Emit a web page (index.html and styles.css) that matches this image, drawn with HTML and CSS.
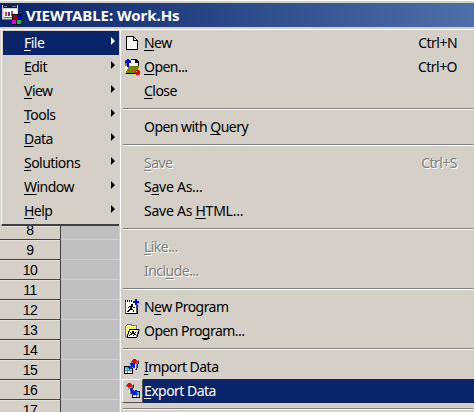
FILE: index.html
```
<!DOCTYPE html>
<html lang="en">
<head>
<meta charset="utf-8">
<title>VIEWTABLE: Work.Hs</title>
<link rel="stylesheet" href="styles.css">
</head>
<body>
<div class="window">
<header class="titlebar">
<svg class="appicon" width="20" height="20" viewBox="0 0 20 20" shape-rendering="crispEdges"><path fill="#d4d0c8" d="M0 0h16v14H0z"/><path fill="#171b35" d="M1 0h14v3H1z"/><path fill="#68749b" d="M2 1h3v1H2zM10 1h4v1h-4z"/><path fill="#fff" d="M2 4h13v8H2z"/><path fill="#e33" d="M3 7h2v4H3zM9 6h2v5H9z"/><path fill="#2445b4" d="M6 7h2v4H6z"/><path fill="#777" d="M0 14h11v1H0zM2 12h9v1H2z"/><path fill="#111" d="M10 9h10v11H10z"/><path fill="#a00022" d="M11 10h4v4h-4z"/><path fill="#00c" d="M16 10h4v4h-4z"/><path fill="#e000e0" d="M10 15h4v4h-4z"/><path fill="#00c43b" d="M15 15h4v4h-4z"/></svg>
<span class="title">VIEWTABLE: Work.Hs</span>
</header>
<main class="body">
<div class="left">
<nav class="menu">
<div class="item active"><span><u>F</u>ile</span><i class="arrow"></i></div>
<div class="item"><span><u>E</u>dit</span><i class="arrow"></i></div>
<div class="item"><span><u>V</u>iew</span><i class="arrow"></i></div>
<div class="item"><span><u>T</u>ools</span><i class="arrow"></i></div>
<div class="item"><span><u>D</u>ata</span><i class="arrow"></i></div>
<div class="item"><span><u>S</u>olutions</span><i class="arrow"></i></div>
<div class="item"><span><u>W</u>indow</span><i class="arrow"></i></div>
<div class="item"><span><u>H</u>elp</span><i class="arrow"></i></div>
</nav>
<div class="table">
<div class="row first"><b>8</b><i></i></div>
<div class="row"><b>9</b><i></i></div>
<div class="row"><b>10</b><i></i></div>
<div class="row"><b>11</b><i></i></div>
<div class="row"><b>12</b><i></i></div>
<div class="row"><b>13</b><i></i></div>
<div class="row"><b>14</b><i></i></div>
<div class="row"><b>15</b><i></i></div>
<div class="row"><b>16</b><i></i></div>
<div class="row"><b>17</b><i></i></div>
</div>
</div>
<nav class="submenu">
<div class="entry"><div class="icon"><svg width="16" height="16" shape-rendering="crispEdges"><path d="M2 1h8v1h1v1h1v1h1v1h1v10H2z"/><path fill="#fff" d="M3 2h6v4h4v8H3zM10 3h1v1h1v1h-2z"/></svg></div><span class="label"><u>N</u>ew</span><span class="key">Ctrl+N</span></div>
<div class="entry"><div class="icon"><svg width="16" height="16" shape-rendering="crispEdges"><path fill="#777" d="M1 1h12v14H1z"/><path fill="#fff" d="M7 1h6l1 2v6H5V3h2z"/><path fill="#ffffa0" d="M1 7h5v2H4v5H1z"/><path d="M7 0h6v1h1v1h1v5h-1V4h-3V1H7zM2 14h11v1H2z"/><path fill="#808000" d="M5 7h10v2h-1v2h-1v2h-1v1H2v-2h1v-2h1V8h1z"/><path fill="#00f" d="M3 0h2v1h1v1h1v2H5v4H3V4H1V2h1V1h1z"/><path fill="#d00" d="M12 11h3v1h1v3h-1v1h-3v-1h-1v-3h1z"/><path fill="#fff" d="M12 12h1v1h-1z"/></svg></div><span class="label"><u>O</u>pen...</span><span class="key">Ctrl+O</span></div>
<div class="entry"><div class="icon"></div><span class="label"><u>C</u>lose</span></div>
<hr>
<div class="entry"><div class="icon"></div><span class="label">Open with <u>Q</u>uery</span></div>
<hr>
<div class="entry disabled"><div class="icon"></div><span class="label"><u>S</u>ave</span><span class="key">Ctrl+S</span></div>
<div class="entry"><div class="icon"></div><span class="label wide">S<u>a</u>ve As...</span></div>
<div class="entry"><div class="icon"></div><span class="label wide">Save As <u>H</u>TML...</span></div>
<hr>
<div class="entry disabled"><div class="icon"></div><span class="label"><u>L</u>ike...</span></div>
<div class="entry disabled"><div class="icon"></div><span class="label">Incl<u>u</u>de...</span></div>
<hr>
<div class="entry"><div class="icon"><svg width="16" height="16" shape-rendering="crispEdges"><path fill="#555" d="M1 2h12v13H1z"/><path fill="#fff" d="M2 2h10v12H2z"/><path d="M1 1h1v2H1zM3 1h1v2H3zM5 1h1v2H5zM7 1h1v2H7zM2 14h12v1H2zM13 6h1v9h-1zM7 5h2v2H7zM5 7h4v1H5zM4 8h1v1H4zM6 8h2v2H6zM9 8h2v1H9zM5 10h4v1H5zM4 11h2v1H4zM3 12h2v1H3zM9 11h1v2H9z"/><path fill="#00f" d="M11 0h2v2h2v2h-2v2h-2V4H9V2h2z"/></svg></div><span class="label">N<u>e</u>w Program</span></div>
<div class="entry"><div class="icon"><svg width="16" height="16" shape-rendering="crispEdges"><path fill="#777" d="M2 2h1V1h5v1h5v4h3v2h-1v3h-1v3h-2v1H2v-1H1V3h1z"/><path fill="#ffff70" d="M3 2h4v1h5v3H5v3H4v4H2V3h1z"/><path fill="#fff" d="M6 7h8v2h-1v3h-1v2H4v-2h1V9h1z"/><path d="M5 6h10v1H5zM4 8h1v3H4zM3 11h1v3H3zM14 8h1v3h-1zM13 11h1v3h-1zM3 14h10v1H3zM8 8h2v2H8zM6 9h1v1H6zM11 9h1v1h-1zM7 10h4v1H7zM6 11h2v1H6zM10 11h2v1h-2zM5 12h1v1H5zM9 12h1v1H9z"/><path fill="#d4d0c8" d="M3 4h1v1H3zM5 4h1v1H5zM7 4h1v1H7zM9 4h1v1H9zM3 7h1v1H3z"/></svg></div><span class="label">Open Pro<u>g</u>ram...</span></div>
<hr>
<div class="entry"><div class="icon"><svg width="16" height="16" shape-rendering="crispEdges"><path fill="#777" d="M7 1h8v3h-1v3h-1v4h-2V6H9V4H7z"/><path fill="#fff" d="M7 1h2v1H7zM13 1h1v1h-1zM11 5h1v5h-1z"/><path fill="#333" d="M14 2h1v3h-1zM13 5h1v4h-1zM12 9h1v2h-1z"/><path fill="#e00" d="M9 0h3v1h1v2h-1v1H9V3H8V1h1z"/><path d="M0 7h6v2h3v6H0z"/><path fill="#fff" d="M1 10h7v4H1z"/><path fill="#00dada" d="M1 8h5v2H1zM3 12h1v1H3zM6 12h1v1H6z"/><path fill="#777" d="M1 11h7v1H1zM3 10h1v4H3z"/><path fill="#0026dd" d="M6 4h5v5H9V8H8v1H7v1H6v1H5V9H4V8h2V7h1V6H6z"/></svg></div><span class="label"><u>I</u>mport Data</span></div>
<div class="entry selected"><div class="icon"><svg width="16" height="16" shape-rendering="crispEdges"><path fill="#777" d="M1 1h8v3H8v3H7v4H5V6H3V4H1z"/><path fill="#fff" d="M1 1h2v1H1zM7 1h1v1H7zM4 5h1v5H4z"/><path fill="#333" d="M8 2h1v3H8zM7 5h1v4H7zM6 9h1v2H6z"/><path fill="#e00" d="M3 0h3v1h1v2H6v1H3V3H2V1h1z"/><path d="M7 8h8v7H7z"/><path fill="#fff" d="M8 11h6v3H8z"/><path fill="#00dada" d="M8 9h6v2H8zM9 12h1v1H9zM12 12h1v1h-1z"/><path fill="#777" d="M8 11h6v1H8zM11 11h1v3h-1z"/><path fill="#0026dd" d="M5 5h2v1h1v1h1v1h1V7h2v5H7v-1h1v-1H7V9H6V8H5z"/></svg></div><span class="label"><u>E</u>xport Data</span></div>
<hr>
</nav>
</main>
</div>
</body>
</html>
```
FILE: styles.css
```
* { box-sizing: border-box; }
body { margin: 0; }
.window {
  width: 474px; height: 412px; overflow: hidden;
  background: #d4d0c8; color: #000;
  font: 14px/24px "Noto Sans", sans-serif;
  letter-spacing: -.54px;
}
.titlebar {
  display: flex; height: 30px;
  border-bottom: 1px solid #fff;
  box-shadow: inset 0 1px #fff, inset 0 3px #d4d0c8, inset 0 -2px #d4d0c8;
  background: linear-gradient(90deg, #0a246a, #4d70a8);
  padding-left: 2px;
}
.appicon { margin-top: 5px; flex: none; }
.title { margin: 3px 0 0 4px; color: #fff; font-size: 15px; font-weight: bold; white-space: nowrap; letter-spacing: -.03px; }
.body { display: flex; height: 382px; }
.left { width: 119px; }
.menu { height: 196px; padding: 1px 0 0 1px; margin-left: 1px; border-left: 1px solid #fff; border-bottom: 2px solid #404040; box-shadow: -1px 2px #404040; margin-bottom: 0; }
.menu { box-shadow: none; }
.item { display: flex; justify-content: space-between; align-items: center; height: 24px; margin-left: -1px; padding: 0 4px 0 22px; }
.item.active { margin-left: 0; padding-left: 21px; background: #0a246a; color: #fff; }
.arrow { width: 0; height: 0; border: 4px solid transparent; border-left-color: currentColor; border-right: 0; margin-top: -4px; }
u { text-decoration-thickness: 1px; text-underline-offset: 2px; text-decoration-skip-ink: none; }
.table { height: 186px; overflow: hidden; background: #c0c0c0; }
.row { display: flex; height: 20px; }
.row.first { height: 14px; }
.row b { width: 61px; border-right: 1px solid #404040; border-bottom: 1px solid #404040; background: #d4d0c8; text-align: center; font: 14px/21px "Liberation Sans", sans-serif; letter-spacing: -.5px; box-shadow: inset 0 1px #e4e1dc; }
.row.first b { line-height: 9px; }
.row i { flex: 1; border-bottom: 1px solid #d4d0c8; }
.submenu { width: 354px; padding-top: 1px; margin-left: 1px; border-left: 1px solid #fff; display: flex; flex-direction: column; }
.entry { flex: none; height: 24px; display: flex; }
.icon { width: 22px; height: 24px; margin-left: 1px; padding: 4px 0 0 2px; }
.icon svg { display: block; }
.label { flex: 1; white-space: nowrap; }
.label.wide { letter-spacing: -.25px; }
.key { padding-right: 17px; }
.disabled { color: #808080; text-shadow: 1px 1px #fff; }
.selected .icon { width: 21px; border: 1px solid; border-color: #fff #505050 #505050 #fff; padding: 3px 0 0 2px; }
.selected .label { padding-left: 1px; background: #0a246a; color: #fff; }
hr { flex: none; width: 350px; height: 2px; margin: 5px 0 5px 2px; border: 0; border-top: 1px solid #808080; border-bottom: 1px solid #fff; }
```
